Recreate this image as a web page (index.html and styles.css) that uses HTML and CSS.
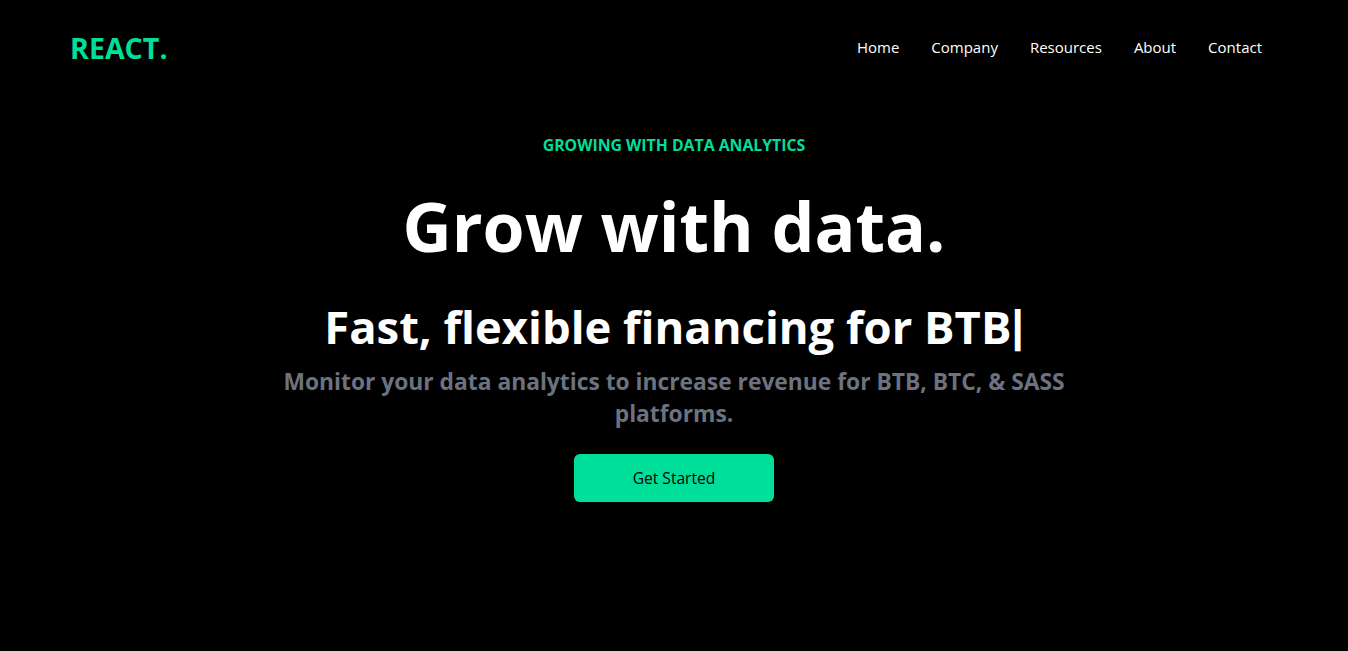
FILE: index.html
```html
<!DOCTYPE html>
<html lang="en">
<head>
<meta charset="utf-8">
<title>React.</title>
<link rel="stylesheet" href="styles.css">
</head>
<body>
<header class="navbar">
  <h1 class="logo">REACT.</h1>
  <ul class="nav-links">
    <li>Home</li>
    <li>Company</li>
    <li>Resources</li>
    <li>About</li>
    <li>Contact</li>
  </ul>
</header>
<main class="hero">
  <p class="eyebrow">GROWING WITH DATA ANALYTICS</p>
  <h1 class="title">Grow with data.</h1>
  <div class="typed-row">
    <p class="typed">Fast, flexible financing for BTB</p>
    <span class="cursor">|</span>
  </div>
  <p class="lead">Monitor your data analytics to increase revenue for BTB, BTC, &amp; SASS platforms.</p>
  <button class="cta">Get Started</button>
</main>
</body>
</html>
```
FILE: styles.css
```css
* { box-sizing: border-box; }
html, body {
  margin: 0;
  padding: 0;
  background: #000;
  color: #fff;
  font-family: "Open Sans", "Noto Sans", sans-serif;
  overflow: hidden;
}
.navbar {
  display: flex;
  justify-content: space-between;
  align-items: center;
  height: 96px;
  max-width: 1240px;
  margin: 0 auto;
  padding: 0 16px;
  position: relative;
  z-index: 1;
}
.logo {
  margin: 0 0 2px;
  font-size: 28.6px;
  font-weight: 700;
  color: #00df9a;
}
.nav-links {
  display: flex;
  list-style: none;
  margin: 0 0 2px;
  padding: 0;
}
.nav-links li {
  padding: 16px;
  font-size: 15px;
  line-height: 22px;
}
.hero {
  max-width: 800px;
  margin: -96px auto 0;
  height: 651px;
  display: flex;
  flex-direction: column;
  justify-content: center;
  text-align: center;
}
.eyebrow {
  margin: 0;
  padding: 7px 8px 9px;
  color: #00df9a;
  font-weight: 700;
  font-size: 15.8px;
  line-height: 24px;
}
.title {
  margin: 0;
  padding: 24px 0;
  font-size: 68px;
  line-height: 72px;
  font-weight: 700;
}
.typed-row {
  display: flex;
  justify-content: center;
  align-items: center;
}
.typed {
  margin: 0;
  padding: 16px 0;
  font-size: 45.4px;
  line-height: 48px;
  font-weight: 700;
}
.cursor {
  display: block;
  font-family: "Liberation Sans", sans-serif;
  font-size: 44px;
  line-height: 48px;
  font-weight: 700;
}
.lead {
  margin: 0;
  font-size: 22.8px;
  line-height: 32px;
  font-weight: 700;
  color: #6b7280;
}
.cta {
  width: 200px;
  margin: 24px auto;
  padding: 12px 0;
  border: 0;
  border-radius: 6px;
  background: #00df9a;
  color: #000;
  font-family: inherit;
  font-size: 15.6px;
  line-height: 24px;
  font-weight: 500;
}
```
